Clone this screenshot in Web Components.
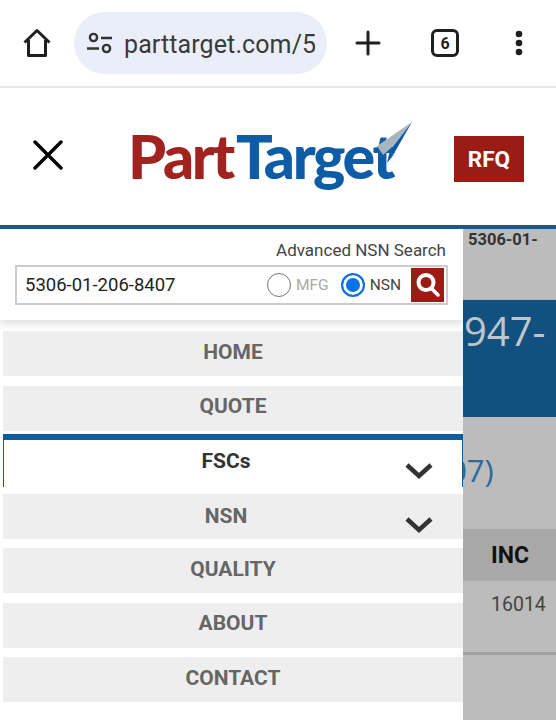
<!DOCTYPE html>
<html>
<head>
<meta charset="utf-8">
<title>PartTarget</title>
<style>
html,body{margin:0;padding:0;width:556px;height:720px;overflow:hidden;background:#fff;font-family:Roboto,"Liberation Sans",sans-serif}
.shell{display:grid;grid-template-columns:463px 93px;height:491px}
</style>
</head>
<body>
<browser-bar url="parttarget.com/53" tabs="6"></browser-bar>
<site-header></site-header>
<div class="shell">
  <nav-drawer>
    <search-panel value="5306-01-206-8407"></search-panel>
    <nav-item style="margin-top:11px">HOME</nav-item>
    <nav-item>QUOTE</nav-item>
    <nav-item open chevron>FSCs</nav-item>
    <nav-item chevron>NSN</nav-item>
    <nav-item>QUALITY</nav-item>
    <nav-item>ABOUT</nav-item>
    <nav-item>CONTACT</nav-item>
  </nav-drawer>
  <dimmed-page></dimmed-page>
</div>
<script>
// little helper, every element below does the same thing in its constructor
function shadow(el, html) {
    el.attachShadow({ mode: 'open' }).innerHTML = html;
}

customElements.define('browser-bar', class extends HTMLElement {
    constructor() {
        super();
        shadow(this, `<style>
:host{display:flex;align-items:center;box-sizing:border-box;height:88px;padding:0 0 0 0;background:#fff;border-bottom:2px solid #e8e8e8;color:#1f1f1f}
svg{display:block;flex:none}
.pill{display:flex;align-items:center;box-sizing:border-box;width:253px;height:62px;margin-left:21px;padding:0 12px 0 12px;border-radius:31px;background:#e9eef8}
.url{margin:2px 0 0 10px;width:191px;font-size:25px;white-space:nowrap;overflow:hidden;color:#3a3a3a;letter-spacing:.1px}
.tab{display:flex;align-items:center;justify-content:center;flex:none;box-sizing:border-box;width:28px;height:28px;margin-left:50px;border:3px solid #1f1f1f;border-radius:6px;font-weight:700;font-size:16px}
</style>
<svg style="margin-left:21px" width="32" height="32" viewBox="0 0 32 32" fill="none" stroke="#1f1f1f" stroke-width="3" stroke-linejoin="round"><path d="M3.500 15.500 16 3.500l12.500 12M7.500 13v15.500h17V13"/></svg>
<div class="pill">
  <svg width="28" height="24" viewBox="0 0 28 24" fill="none" stroke="#333" stroke-width="2.400"><circle cx="7.500" cy="6.500" r="3.600"/><path d="M15 7h11M1 17.500h12"/><circle cx="20.500" cy="17.500" r="3.600"/></svg>
  <span class="url"></span>
</div>
<svg style="margin-left:28px" width="26" height="26" viewBox="0 0 26 26" stroke="#1f1f1f" stroke-width="3" stroke-linecap="round"><path d="M13 2v22M2 13h22"/></svg>
<span class="tab"></span>
<svg style="margin-left:56px" width="8" height="26" viewBox="0 0 8 26" fill="#1f1f1f"><circle cx="4" cy="4" r="3.300"/><circle cx="4" cy="13" r="3.300"/><circle cx="4" cy="22" r="3.300"/></svg>`);
        this.shadowRoot.querySelector('.url').textContent = this.getAttribute('url');
        this.shadowRoot.querySelector('.tab').textContent = this.getAttribute('tabs');
    }
});

customElements.define('site-header', class extends HTMLElement {
    constructor() {
        super();
        shadow(this, `<style>
:host{display:flex;align-items:center;box-sizing:border-box;height:141px;padding:0 32px 0 33px;border-bottom:4px solid #14598f;background:#fff}
.x{margin-top:-3px;flex:none}
.logo{position:relative;display:block;margin:-2px 0 0 65px;font:900 61px/1 Lato,sans-serif;letter-spacing:-2.400px;white-space:nowrap;width:284px;flex:none}
.part{color:#a1231f}.target{color:#0e5ca6;margin-left:3px}
.logo svg{position:absolute;left:246px;top:-3px}
.rfq{display:flex;align-items:center;justify-content:center;margin:4px 0 0 auto;width:70px;height:46px;background:#9b1c14;color:#fff;font-weight:700;font-size:22.500px}
</style>
<svg class="x" width="30" height="30" viewBox="0 0 30 30" stroke="#000" stroke-width="3.400" stroke-linecap="round"><path d="M2 2l26 26M28 2 2 28"/></svg>
<span class="logo"><span class="part">Part</span><span class="target">Target</span>
<svg width="44" height="50" viewBox="0 0 44 50"><path d="M38 0 3 24l6 9 8-7z" fill="#a9b4bc"/><path d="M38 0 16 28l-3 13 5-6z" fill="#0e5ca6"/></svg></span>
<div class="rfq">RFQ</div>`);
    }
});

customElements.define('nav-drawer', class extends HTMLElement {
    constructor() {
        super();
        shadow(this, `<style>:host{display:block;background:#fff;height:491px;overflow:hidden}</style><slot></slot>`);
    }
});

customElements.define('search-panel', class extends HTMLElement {
    constructor() {
        super();
        shadow(this, `<style>
:host{display:block;box-sizing:border-box;height:91px;padding:11px 15px 0 15px;background:#fff;box-shadow:0 4px 8px rgba(0,0,0,.13);position:relative}
.hint{text-align:right;padding-right:2px;font-size:17px;line-height:20px;color:#444}
.box{display:flex;align-items:center;box-sizing:border-box;width:433px;height:40px;margin-top:5px;border:2px solid #ccc;background:#fff}
.val{flex:1;padding-left:8px;font-size:18.500px;color:#222}
.go{display:flex;align-items:center;justify-content:center;width:33px;height:34px;margin:0 2px 0 10px;background:#9b1c14}
</style>
<div class="hint">Advanced NSN Search</div>
<div class="box">
  <span class="val"></span>
  <pt-radio>MFG</pt-radio>
  <pt-radio checked style="margin-left:12px">NSN</pt-radio>
  <span class="go"><svg width="26" height="26" viewBox="0 0 26 26" fill="none" stroke="#fff"><circle cx="11" cy="10.500" r="7.500" stroke-width="4"/><path d="M16 16l7 7" stroke-width="3.500" stroke-linecap="round"/></svg></span>
</div>`);
        this.shadowRoot.querySelector('.val').textContent = this.getAttribute('value');
    }
});

customElements.define('pt-radio', class extends HTMLElement {
    constructor() {
        super();
        shadow(this, `<style>
:host{display:inline-flex;align-items:center;gap:5px;font-size:15.500px;color:#aaa}
:host([checked]){color:#444}
i{display:block;box-sizing:border-box;width:24px;height:24px;border-radius:50%;border:1.500px solid #777;background:#fff}
:host([checked]) i{border:2px solid #0b72e8;background:#0b72e8;box-shadow:inset 0 0 0 3px #fff}
</style><i></i><slot></slot>`);
    }
});

customElements.define('nav-item', class extends HTMLElement {
    constructor() {
        super();
        shadow(this, `<style>
:host{display:flex;position:relative;align-items:center;justify-content:center;box-sizing:border-box;height:45px;padding-bottom:4px;margin:0 0 9.500px 3px;background:#eee;color:#666;font-weight:700;font-size:21px}
:host([chevron]){padding-right:14px;padding-bottom:1px}
:host([open]){height:53px;margin-top:-6.500px;margin-bottom:7px;padding-top:0;padding-bottom:4px;background:#fff;color:#333;border-top:6px solid #0f5c9e;border-left:1px solid #14598f;border-right:1px solid #14598f}
svg{position:absolute;right:30px;top:22px}
:host([open]) svg{top:22px;right:29px}
</style><slot></slot>`);
        if (this.hasAttribute('chevron')) {
            this.shadowRoot.innerHTML += `<svg width="28" height="18" viewBox="0 0 28 18" fill="none" stroke="#333" stroke-width="4.500"><path d="M2 3l12 11L26 3"/></svg>`;
        }
    }
});

customElements.define('dimmed-page', class extends HTMLElement {
    constructor() {
        super();
        shadow(this, `<style>
:host{display:block;height:491px;overflow:hidden;background:#bcbcbc;color:#333}
.nsn{box-sizing:border-box;height:70px;padding:1px 0 0 5px;font-weight:700;font-size:16.500px;line-height:20px;white-space:nowrap}
.title{box-sizing:border-box;height:118px;padding-left:1px;background:#12507f;color:#bfc5ca;font:400 40px/62px "Open Sans",sans-serif;white-space:nowrap;border-top:1px solid #a9b6c0}
.code{box-sizing:border-box;height:112px;padding-top:31px;margin-left:-23px;color:#2a6a9c;font:400 31px/44px "Open Sans",sans-serif;white-space:nowrap}
.head{display:flex;align-items:center;height:52px;padding-left:28px;background:#a8a8a8;color:#111;font-weight:700;font-size:23px}
.cell{box-sizing:border-box;height:74px;padding:10px 0 0 28px;font-size:19.500px;line-height:28px;color:#444;border-bottom:3px solid #9f9f9f}
</style>
<div class="nsn">5306-01-</div>
<div class="title">947-</div>
<div class="code">(07)</div>
<div class="head">INC</div>
<div class="cell">16014</div>`);
    }
});
</script>
</body>
</html>
